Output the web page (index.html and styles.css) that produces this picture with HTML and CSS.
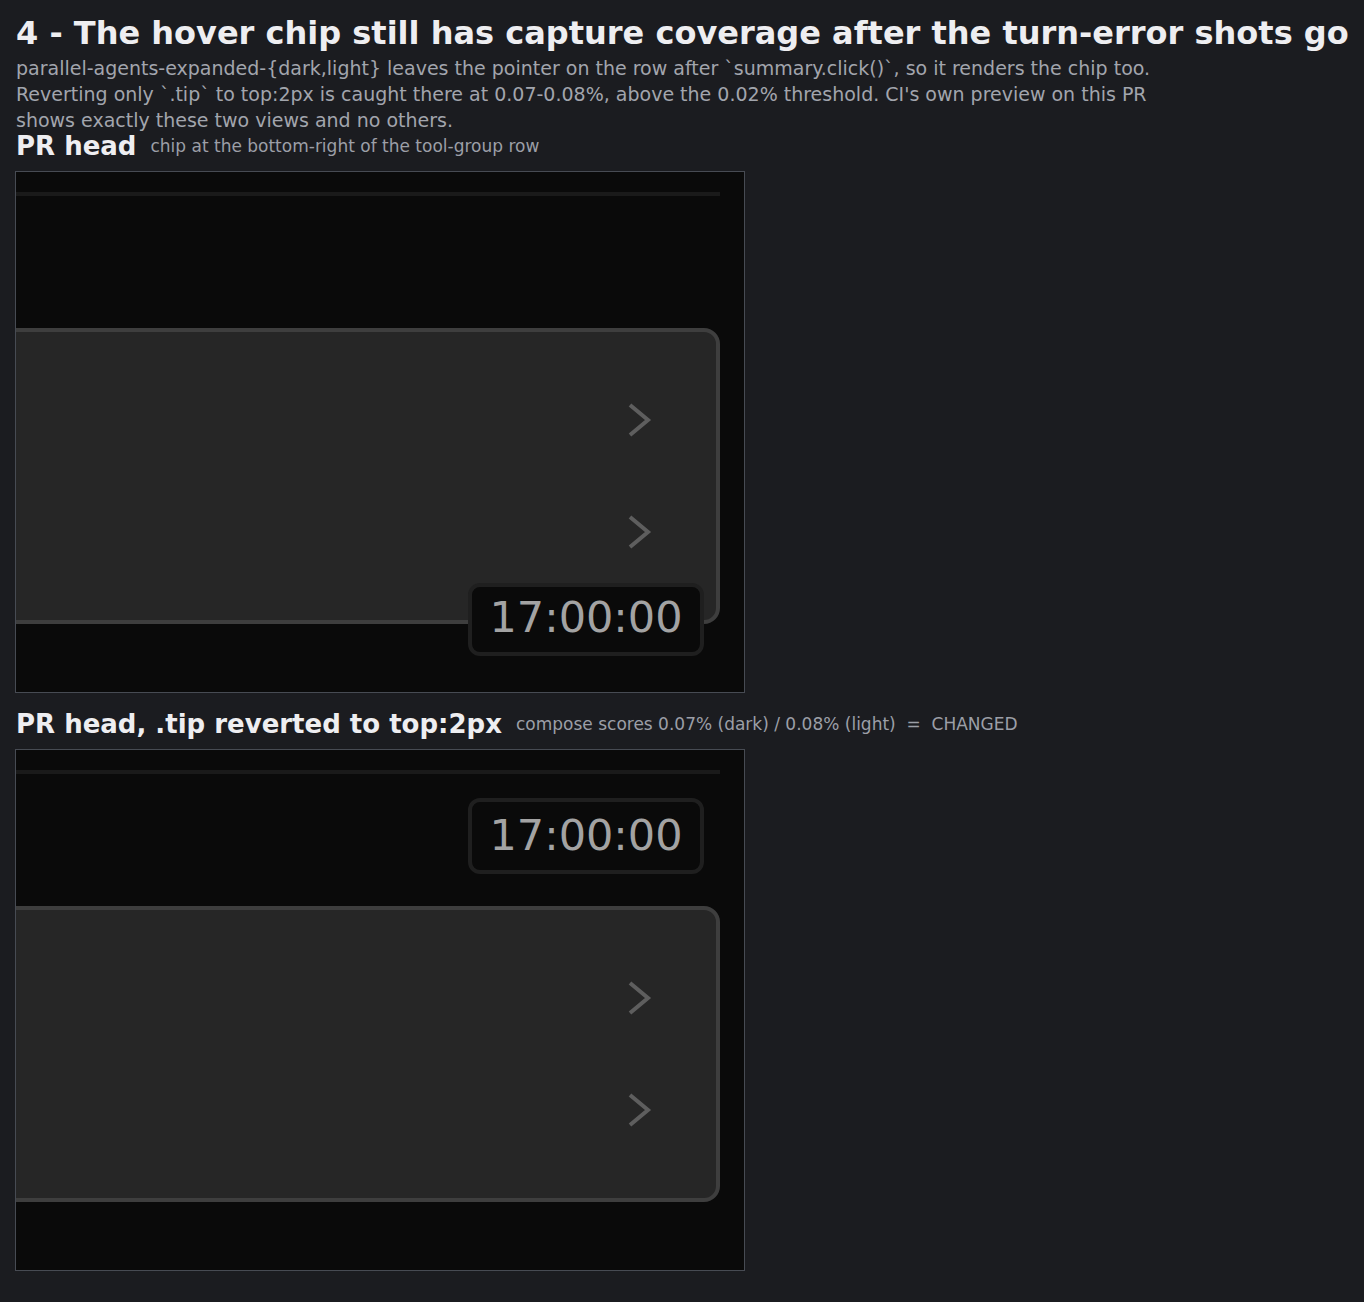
FILE: index.html
```html
<!DOCTYPE html>
<html>
<head>
<meta charset="utf-8">
<link rel="stylesheet" href="styles.css">
</head>
<body>
<h1 class="title">4 - The hover chip still has capture coverage after the turn-error shots go</h1>
<p class="lede">parallel-agents-expanded-{dark,light} leaves the pointer on the row after `summary.click()`, so it renders the chip too.<br>Reverting only `.tip` to top:2px is caught there at 0.07-0.08%, above the 0.02% threshold. CI's own preview on this PR<br>shows exactly these two views and no others.</p>

<section class="shot">
  <div class="shot-head"><h2 class="shot-title">PR head</h2><span class="shot-note">chip at the bottom-right of the tool-group row</span></div>
  <div class="frame">
    <div class="canvas">
      <div class="rule"></div>
      <div class="card">
        <div class="row"><svg class="chev" width="24" height="34" viewBox="0 0 24 34"><polyline points="2,2 20,17 2,32" fill="none" stroke="#5e5e5e" stroke-width="4" stroke-linejoin="miter"/></svg></div>
        <div class="row"><svg class="chev" width="24" height="34" viewBox="0 0 24 34"><polyline points="2,2 20,17 2,32" fill="none" stroke="#5e5e5e" stroke-width="4" stroke-linejoin="miter"/></svg></div>
      </div>
      <div class="chip chip-bottom">17:00:00</div>
    </div>
  </div>
</section>

<section class="shot shot-2">
  <div class="shot-head"><h2 class="shot-title">PR head, .tip reverted to top:2px</h2><span class="shot-note">compose scores 0.07% (dark) / 0.08% (light)&nbsp; = &nbsp;CHANGED</span></div>
  <div class="frame">
    <div class="canvas">
      <div class="rule"></div>
      <div class="card">
        <div class="row"><svg class="chev" width="24" height="34" viewBox="0 0 24 34"><polyline points="2,2 20,17 2,32" fill="none" stroke="#5e5e5e" stroke-width="4" stroke-linejoin="miter"/></svg></div>
        <div class="row"><svg class="chev" width="24" height="34" viewBox="0 0 24 34"><polyline points="2,2 20,17 2,32" fill="none" stroke="#5e5e5e" stroke-width="4" stroke-linejoin="miter"/></svg></div>
      </div>
      <div class="chip chip-top">17:00:00</div>
    </div>
  </div>
</section>
</body>
</html>
```

FILE: styles.css
```css
html, body {
  margin: 0;
  padding: 0;
  background: #1b1c20;
}
body {
  padding: 16px 16px 0 16px;
  font-family: "DejaVu Sans", sans-serif;
  color: #eeeef1;
}
.title {
  margin: 0;
  font-size: 32px;
  line-height: 34px;
  font-weight: bold;
  color: #eeeef1;
  white-space: nowrap;
}
.lede {
  margin: 5px 0 0 0;
  font-size: 19px;
  line-height: 26px;
  color: #a2a5ad;
  white-space: nowrap;
}
.shot-head {
  display: flex;
  align-items: center;
  gap: 14px;
  height: 26px;
}
.shot-title {
  margin: 0;
  font-size: 26px;
  line-height: 26px;
  font-weight: bold;
  color: #eeeef1;
}
.shot-note {
  font-size: 17px;
  line-height: 26px;
  color: #9c9fa7;
}
.shot-2 {
  margin-top: 18px;
}
.frame {
  margin-top: 12px;
  margin-left: -1px;
  width: 728px;
  height: 520px;
  border: 1px solid #474b53;
  background: #0a0a0a;
}
.canvas {
  position: relative;
  width: 728px;
  height: 520px;
  overflow: hidden;
  padding-top: 20px;
  box-sizing: border-box;
}
.rule {
  width: 704px;
  height: 4px;
  background: #1a1a1a;
}
.card {
  margin-top: 132px;
  margin-left: -40px;
  width: 744px;
  height: 296px;
  box-sizing: border-box;
  border: 4px solid #3e3e3e;
  border-radius: 16px;
  background: #262626;
  padding: 32px 64px 32px 0;
  display: flex;
  flex-direction: column;
}
.row {
  height: 112px;
  display: flex;
  align-items: center;
  justify-content: flex-end;
}
.chev {
  display: block;
}
.chip {
  position: absolute;
  left: 452px;
  width: 236px;
  height: 73px;
  box-sizing: border-box;
  border: 4px solid #1f1f1f;
  border-radius: 12px;
  background: #0a0a0a;
  color: #a3a3a3;
  font-family: "DejaVu Sans", sans-serif;
  font-size: 43px;
  line-height: 60px;
  text-align: center;
}
.chip-bottom {
  top: 411px;
}
.chip-top {
  top: 48px;
  height: 76px;
  line-height: 66px;
}
```
